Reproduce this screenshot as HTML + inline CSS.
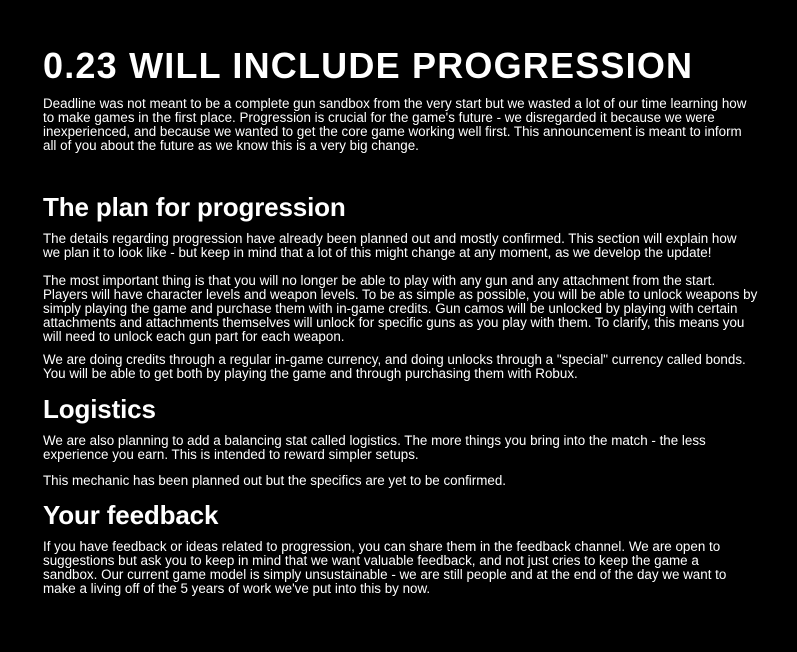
<!DOCTYPE html>
<html><head><meta charset="utf-8"><style>
html,body{margin:0;padding:0;background:#000;}
body{width:797px;height:652px;position:relative;overflow:hidden;color:#fff;font-family:"Liberation Sans",sans-serif;}
.b{position:absolute;left:43px;font-size:13.4px;line-height:14px;white-space:nowrap;}
.h{position:absolute;left:43px;font-weight:bold;font-size:26px;line-height:28px;white-space:nowrap;letter-spacing:-0.15px;}
.t{position:absolute;left:43px;top:45px;font-size:36px;line-height:42px;white-space:nowrap;letter-spacing:1.2px;font-weight:bold;}
</style></head><body>
<div class="t">0.23 WILL INCLUDE PROGRESSION</div>
<div class="b" style="top:97px">Deadline was not meant to be a complete gun sandbox from the very start but we wasted a lot of our time learning how<br>to make games in the first place. Progression is crucial for the game's future - we disregarded it because we were<br>inexperienced, and because we wanted to get the core game working well first. This announcement is meant to inform<br>all of you about the future as we know this is a very big change.</div>
<div class="h" style="top:193px">The plan for progression</div>
<div class="b" style="top:232px">The details regarding progression have already been planned out and mostly confirmed. This section will explain how<br>we plan it to look like - but keep in mind that a lot of this might change at any moment, as we develop the update!</div>
<div class="b" style="top:274px">The most important thing is that you will no longer be able to play with any gun and any attachment from the start.<br>Players will have character levels and weapon levels. To be as simple as possible, you will be able to unlock weapons by<br>simply playing the game and purchase them with in-game credits. Gun camos will be unlocked by playing with certain<br>attachments and attachments themselves will unlock for specific guns as you play with them. To clarify, this means you<br>will need to unlock each gun part for each weapon.</div>
<div class="b" style="top:353px">We are doing credits through a regular in-game currency, and doing unlocks through a "special" currency called bonds.<br>You will be able to get both by playing the game and through purchasing them with Robux.</div>
<div class="h" style="top:395px">Logistics</div>
<div class="b" style="top:434px">We are also planning to add a balancing stat called logistics. The more things you bring into the match - the less<br>experience you earn. This is intended to reward simpler setups.</div>
<div class="b" style="top:474px">This mechanic has been planned out but the specifics are yet to be confirmed.</div>
<div class="h" style="top:501px">Your feedback</div>
<div class="b" style="top:540px">If you have feedback or ideas related to progression, you can share them in the feedback channel. We are open to<br>suggestions but ask you to keep in mind that we want valuable feedback, and not just cries to keep the game a<br>sandbox. Our current game model is simply unsustainable - we are still people and at the end of the day we want to<br>make a living off of the 5 years of work we've put into this by now.</div>
</body></html>
